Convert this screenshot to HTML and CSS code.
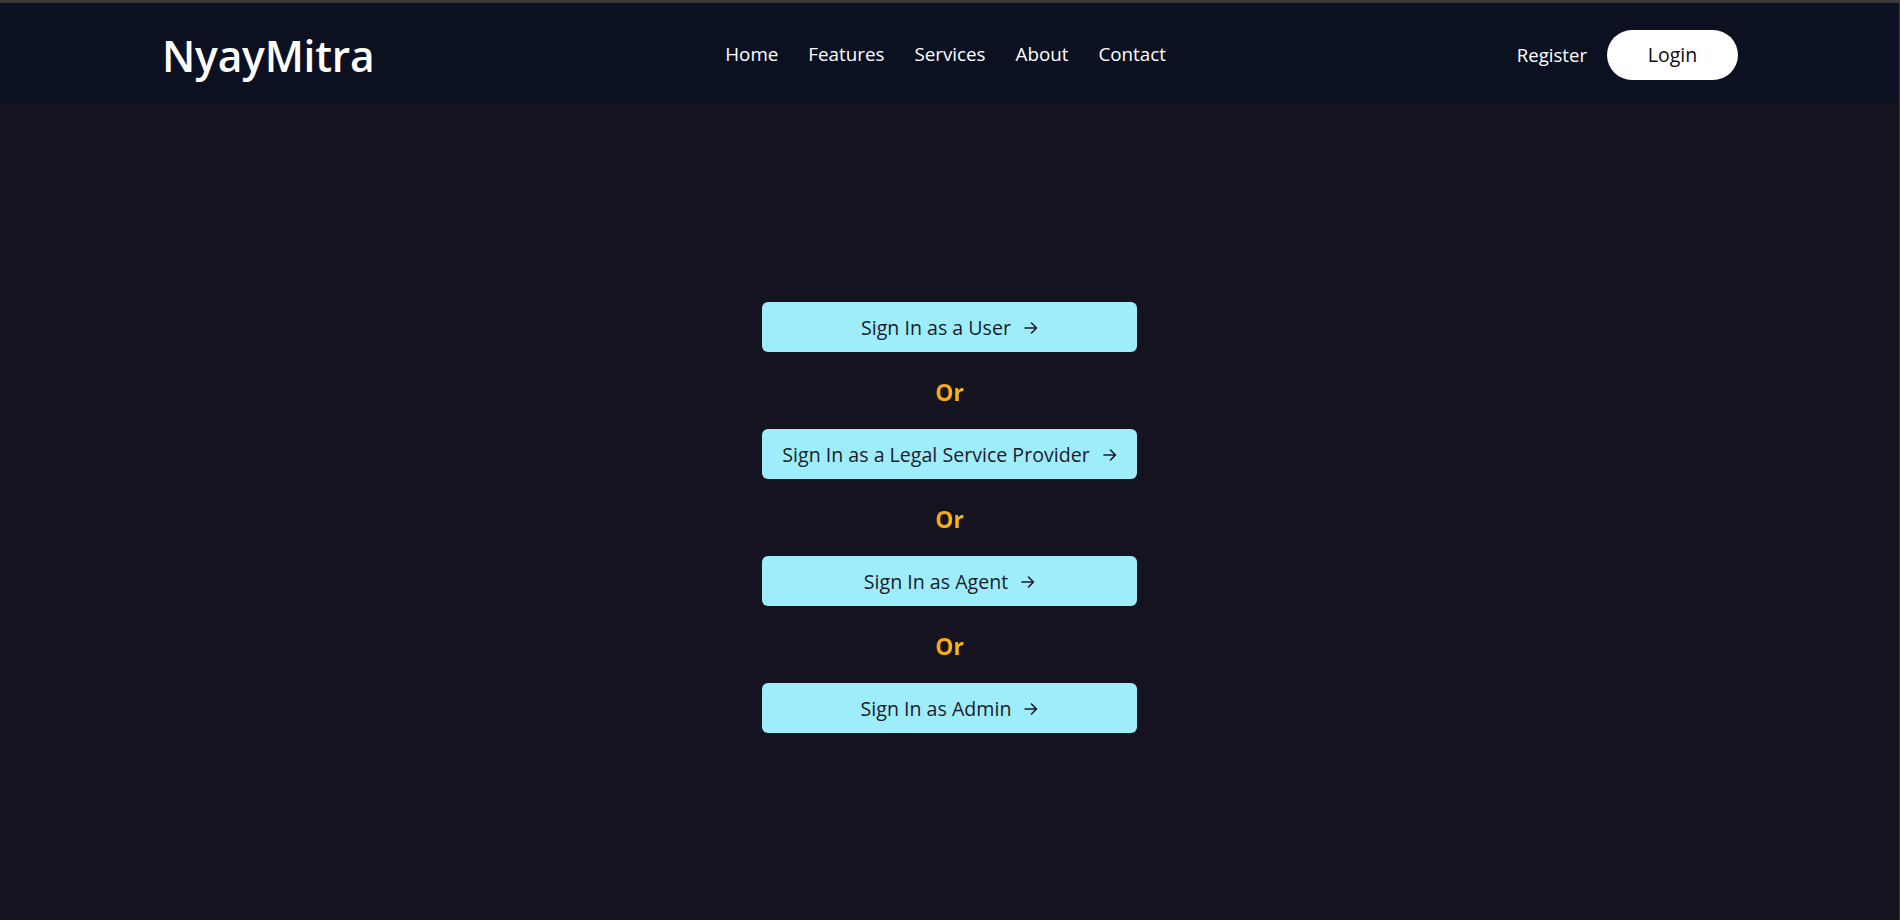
FILE: index.html
```html
<!DOCTYPE html>
<html lang="en">
<head>
<meta charset="utf-8">
<title>NyayMitra</title>
<link rel="stylesheet" href="styles.css">
</head>
<body>
<div class="frame">
  <header class="header">
    <div class="logo">NyayMitra</div>
    <nav class="nav">
      <a href="#">Home</a>
      <a href="#">Features</a>
      <a href="#">Services</a>
      <a href="#">About</a>
      <a href="#">Contact</a>
    </nav>
    <div class="auth">
      <a class="register" href="#">Register</a>
      <a class="login" href="#">Login</a>
    </div>
  </header>
  <main class="main">
    <div class="choices">
      <a class="choice" href="#"><span>Sign In as a User</span><svg class="arrow" viewBox="0 0 14 12" width="14" height="12"><path d="M1 6H12.5M7.5 1L12.5 6L7.5 11" fill="none" stroke="currentColor" stroke-width="1.6" stroke-linecap="round" stroke-linejoin="round"/></svg></a>
      <div class="or">Or</div>
      <a class="choice" href="#"><span>Sign In as a Legal Service Provider</span><svg class="arrow" viewBox="0 0 14 12" width="14" height="12"><path d="M1 6H12.5M7.5 1L12.5 6L7.5 11" fill="none" stroke="currentColor" stroke-width="1.6" stroke-linecap="round" stroke-linejoin="round"/></svg></a>
      <div class="or">Or</div>
      <a class="choice" href="#"><span>Sign In as Agent</span><svg class="arrow" viewBox="0 0 14 12" width="14" height="12"><path d="M1 6H12.5M7.5 1L12.5 6L7.5 11" fill="none" stroke="currentColor" stroke-width="1.6" stroke-linecap="round" stroke-linejoin="round"/></svg></a>
      <div class="or">Or</div>
      <a class="choice" href="#"><span>Sign In as Admin</span><svg class="arrow" viewBox="0 0 14 12" width="14" height="12"><path d="M1 6H12.5M7.5 1L12.5 6L7.5 11" fill="none" stroke="currentColor" stroke-width="1.6" stroke-linecap="round" stroke-linejoin="round"/></svg></a>
    </div>
  </main>
</div>
</body>
</html>
```
FILE: styles.css
```css
* { box-sizing: border-box; }
html, body { margin: 0; padding: 0; height: 100%; }
body {
  background: #14131f;
  font-family: "Open Sans", "Noto Sans", sans-serif;
  overflow: hidden;
}
a { text-decoration: none; color: inherit; }
.frame {
  height: 920px;
  border-top: 3px solid #3a3a3a;
  border-right: 1px solid #3a3a3a;
  display: flex;
  flex-direction: column;
}
.header {
  height: 100px;
  background: #0b1120;
  display: flex;
  align-items: center;
  padding: 0 161px 0 162px;
}
.logo {
  color: #ffffff;
  font-size: 42.5px;
  font-weight: 600;
  letter-spacing: -0.2px;
  line-height: 1;
  margin-top: 6px;
}
.nav {
  flex: 1;
  display: flex;
  justify-content: center;
  gap: 30px;
  margin-top: 2px;
}
.nav a {
  color: #ffffff;
  font-size: 18.8px;
  line-height: 1;
}
.auth {
  display: flex;
  align-items: center;
  gap: 20px;
}
.register {
  color: #ffffff;
  font-size: 18.6px;
  margin-top: 2px;
}
.login {
  width: 131px;
  height: 50px;
  border-radius: 25px;
  background: #ffffff;
  color: #0b0b12;
  font-size: 19.5px;
  font-weight: 500;
  display: flex;
  align-items: center;
  justify-content: center;
  margin-top: 3px;
}
.main {
  flex: 1;
  display: flex;
  justify-content: center;
  padding-top: 199px;
}
.choices {
  display: flex;
  flex-direction: column;
  align-items: center;
}
.choice {
  width: 375px;
  height: 50px;
  border-radius: 6px;
  background: #9deefa;
  color: #1d1b2b;
  font-size: 19.6px;
  font-weight: 500;
  display: flex;
  align-items: center;
  justify-content: center;
  gap: 13px;
}
.arrow { color: #1d1b2b; margin-top: 1px; }
.or {
  height: 77px;
  display: flex;
  align-items: center;
  justify-content: center;
  font-size: 23px;
  font-weight: 700;
  background: linear-gradient(90deg, #f59e0b, #fbbf24);
  -webkit-background-clip: text;
  background-clip: text;
  color: transparent;
  width: 40px;
  padding-top: 3px;
}
```
